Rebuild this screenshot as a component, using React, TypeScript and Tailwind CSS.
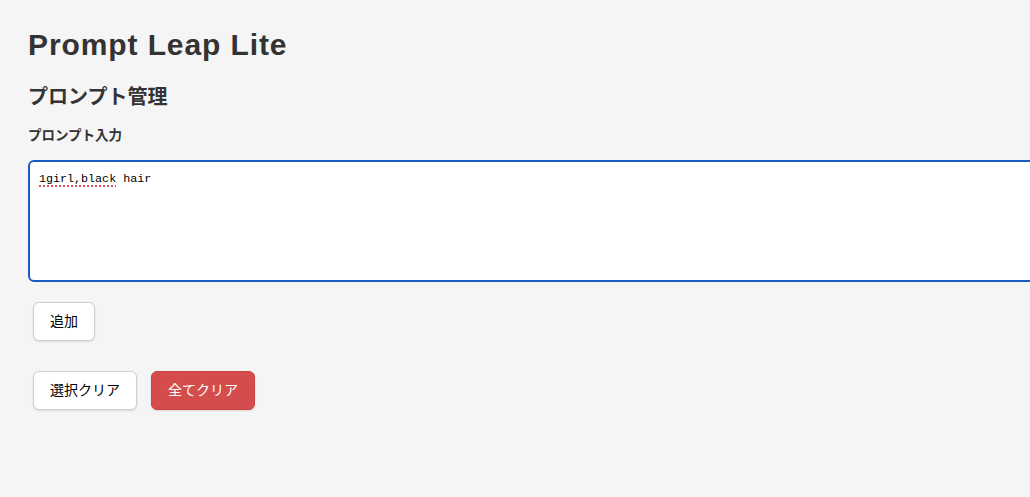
export default function App() {
  const sans = "font-['Liberation_Sans','Noto_Sans_CJK_JP',sans-serif]";

  return (
    <div className={`min-h-screen w-full overflow-hidden bg-[#f5f5f5] text-[#333] ${sans}`}>
      <div className="pl-[28px] pt-[26px]">
        <h1 className="text-[30px] font-semibold leading-[38px] tracking-[0.9px]">Prompt Leap Lite</h1>

        <h2 className="mt-[19px] text-[20px] font-bold leading-[28px]">プロンプト管理</h2>

        <label className="mt-[15px] block text-[13.5px] font-bold leading-[20px]">プロンプト入力</label>

        {/* prompt box */}
        <div className="mt-[14px] h-[122px] w-[1030px] rounded-[6px] border-2 border-[#1c5bc3] bg-white px-[9px] pt-[9px]">
          <p className="font-['Liberation_Mono',monospace] text-[11.7px] leading-[16px] text-black">
            <span className="underline decoration-dotted decoration-[#e25454] decoration-2 underline-offset-[3px]">1girl,black</span> hair
          </p>
        </div>

        <div className="ml-[5px] mt-[20px]">
          <button className="h-[39px] rounded-[6px] border border-[#cfcfcf] bg-white px-[16px] text-[14px] text-black shadow-[0_1px_2px_rgba(0,0,0,0.12)]">
            追加
          </button>
        </div>

        <div className="ml-[5px] mt-[30px] flex gap-[14px]">
          <button className="h-[39px] rounded-[6px] border border-[#cfcfcf] bg-white px-[16px] text-[14px] text-black shadow-[0_1px_2px_rgba(0,0,0,0.12)]">
            選択クリア
          </button>
          <button className="h-[39px] rounded-[6px] border border-[#c94444] bg-[#d54c4c] px-[16px] text-[14px] text-white shadow-[0_1px_2px_rgba(0,0,0,0.12)]">
            全てクリア
          </button>
        </div>
      </div>
    </div>
  );
}
